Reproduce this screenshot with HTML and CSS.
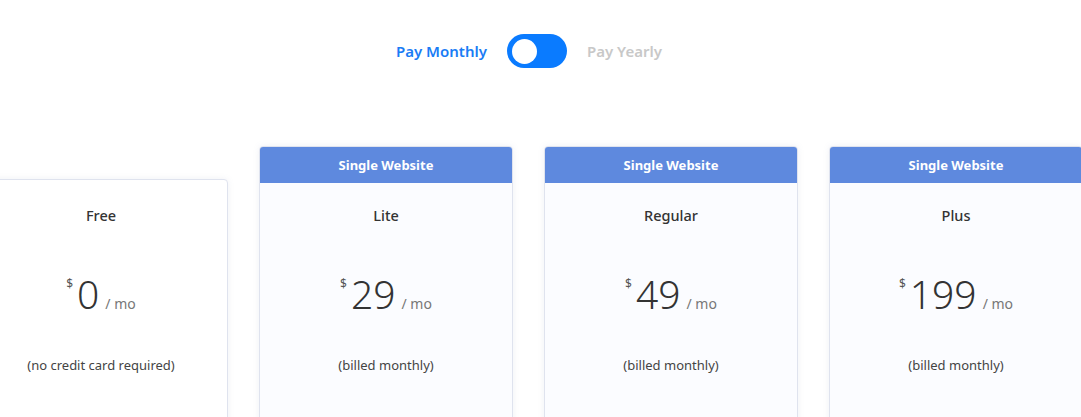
FILE: index.html
```html
<!DOCTYPE html>
<html>
<head>
<meta charset="utf-8">
<link rel="stylesheet" href="styles.css">
</head>
<body>
<div class="billing">
  <span class="label label-active">Pay Monthly</span>
  <span class="switch"><span class="knob"></span></span>
  <span class="label label-muted">Pay Yearly</span>
</div>
<div class="plans">
  <div class="card card-free">
    <div class="body body-free">
      <div class="name">Free</div>
      <div class="price"><span class="cur">$</span><span class="amount">0</span><span class="per">/ mo</span></div>
      <div class="note">(no credit card required)</div>
    </div>
  </div>
  <div class="card">
    <div class="head">Single Website</div>
    <div class="body">
      <div class="name">Lite</div>
      <div class="price"><span class="cur">$</span><span class="amount">29</span><span class="per">/ mo</span></div>
      <div class="note">(billed monthly)</div>
    </div>
  </div>
  <div class="card">
    <div class="head">Single Website</div>
    <div class="body">
      <div class="name">Regular</div>
      <div class="price"><span class="cur">$</span><span class="amount">49</span><span class="per">/ mo</span></div>
      <div class="note">(billed monthly)</div>
    </div>
  </div>
  <div class="card">
    <div class="head">Single Website</div>
    <div class="body">
      <div class="name">Plus</div>
      <div class="price"><span class="cur">$</span><span class="amount">199</span><span class="per">/ mo</span></div>
      <div class="note">(billed monthly)</div>
    </div>
  </div>
</div>
</body>
</html>
```
FILE: styles.css
```css
html, body {
  margin: 0;
  padding: 0;
  background: #ffffff;
  overflow: hidden;
}
body {
  font-family: "Noto Sans", "Open Sans", sans-serif;
  color: #333333;
  width: 1081px;
  height: 417px;
}
.billing {
  display: grid;
  grid-template-columns: 1fr 60px 1fr;
  column-gap: 20px;
  align-items: center;
  padding-top: 34px;
  padding-right: 7px;
}
.label {
  font-size: 15px;
  font-weight: 600;
}
.label-active {
  color: #1a7cf5;
  justify-self: end;
}
.label-muted {
  color: #c8c8c8;
  justify-self: start;
}
.switch {
  width: 60px;
  height: 34px;
  border-radius: 17px;
  background: #0a7bff;
  display: flex;
  align-items: center;
  padding-left: 5px;
  box-sizing: border-box;
}
.knob {
  width: 25px;
  height: 25px;
  border-radius: 50%;
  background: #ffffff;
}
.plans {
  display: flex;
  gap: 31px;
  margin-left: -26px;
  margin-top: 78px;
  align-items: flex-start;
}
.card {
  flex: 0 0 254px;
  width: 254px;
  height: 280px;
  box-sizing: border-box;
  border: 1px solid #dfe3ee;
  border-radius: 4px;
  background: #fbfcff;
  box-shadow: 0 0 6px rgba(120, 130, 170, 0.12);
  overflow: hidden;
}
.card-free {
  margin-top: 33px;
  height: 247px;
  background: #ffffff;
}
.head {
  height: 36px;
  background: #5e89de;
  color: #ffffff;
  font-size: 13px;
  font-weight: 700;
  display: flex;
  align-items: center;
  justify-content: center;
}
.body {
  text-align: center;
  padding-top: 21px;
}
.body-free {
  padding-top: 24px;
}
.name {
  font-size: 14.5px;
  font-weight: 500;
  color: #333333;
  line-height: 22px;
}
.price {
  margin-top: 43px;
  height: 50px;
  display: flex;
  justify-content: center;
  align-items: baseline;
  color: #333333;
}
.cur {
  font-size: 12px;
  color: #555555;
  align-self: flex-start;
  margin-top: 6px;
  margin-right: 4px;
}
.amount {
  font-size: 39px;
  font-weight: 300;
  line-height: 50px;
}
.per {
  font-size: 14px;
  color: #777777;
  margin-left: 6px;
}
.note {
  margin-top: 37px;
  font-size: 13px;
  color: #444444;
}
```
